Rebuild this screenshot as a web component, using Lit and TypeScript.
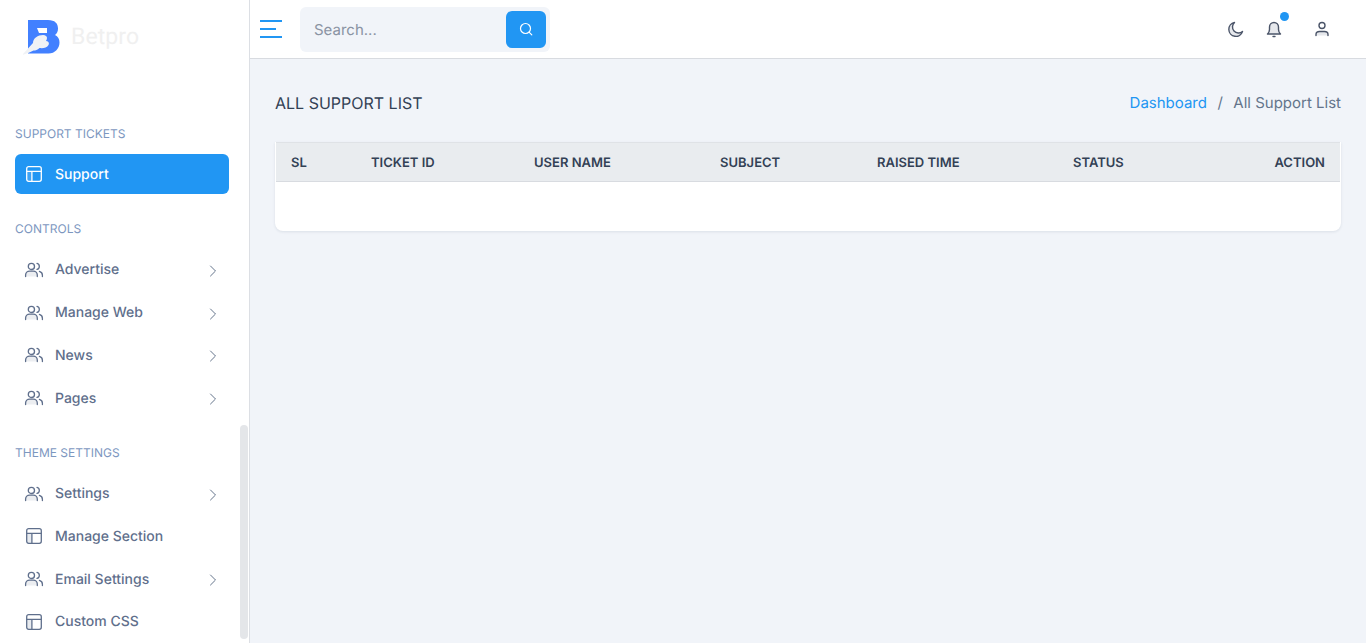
import { LitElement, html, css } from "lit";
import { customElement } from "lit/decorators.js";

const users = html`<svg class="ic" viewBox="0 0 20 20" fill="none" stroke="currentColor" stroke-width="1.300" stroke-linecap="round" stroke-linejoin="round"><path d="M1.600 16.600v-1.500c0-2.200 1.800-4 4-4h3.700c2.200 0 4 1.800 4 4v1.500" fill="#eceef1" stroke="none"/><path d="M1.600 16.600v-1.500c0-2.200 1.800-4 4-4h3.700c2.200 0 4 1.800 4 4v1.500"/><circle cx="7.400" cy="6.400" r="3.100"/><path d="M13 3.400a3.100 3.100 0 0 1 0 6M15.400 11.400c1.800.5 3 2 3 3.800v1.400"/></svg>`;
const layout = html`<svg class="ic" viewBox="0 0 20 20" fill="none" stroke="currentColor" stroke-width="1.300" stroke-linejoin="round"><rect x="2.700" y="2.700" width="14.600" height="14.600" rx="2" /><rect x="2.700" y="7.400" width="5.200" height="9.900" fill="currentColor" fill-opacity=".14" stroke="none"/><path d="M2.700 7.400h14.600M7.900 7.400v9.900"/></svg>`;
const chev = html`<svg class="chev" viewBox="0 0 8 12" fill="none" stroke="currentColor" stroke-width="1" stroke-linecap="round" stroke-linejoin="round"><path d="M1.500 1l5 5-5 5"/></svg>`;

type Item = { label: string; icon: "users" | "layout"; arrow?: boolean; active?: boolean };
const groups: { title: string; items: Item[] }[] = [
  { title: "SUPPORT TICKETS", items: [{ label: "Support", icon: "layout", active: true }] },
  { title: "CONTROLS", items: [
    { label: "Advertise", icon: "users", arrow: true },
    { label: "Manage Web", icon: "users", arrow: true },
    { label: "News", icon: "users", arrow: true },
    { label: "Pages", icon: "users", arrow: true },
  ] },
  { title: "THEME SETTINGS", items: [
    { label: "Settings", icon: "users", arrow: true },
    { label: "Manage Section", icon: "layout" },
    { label: "Email Settings", icon: "users", arrow: true },
    { label: "Custom CSS", icon: "layout" },
  ] },
];
const cols = ["SL", "TICKET ID", "USER NAME", "SUBJECT", "RAISED TIME", "STATUS", "ACTION"];

@customElement("app-root")
export class AppRoot extends LitElement {
  static styles = css`
    :host { display: block; height: 643px; overflow: hidden; font-family: Inter, "Noto Sans", sans-serif; background: #f1f4f9; color: #334155; text-rendering: geometricPrecision; }
    * { box-sizing: border-box; }
    .app { display: flex; height: 643px; }
    .side { position: relative; width: 250px; flex: none; height: 643px; background: #fff; border-right: 1px solid #dcdfe4; overflow: hidden; padding: 0 20px 0 15px; }
    .logo { height: 74px; padding: 18px 0 0 8px; display: flex; align-items: flex-start; gap: 8px; }
    .logo svg { width: 40px; height: 40px; flex: none; }
    .logo span { font-family: Roboto, sans-serif; font-size: 23px; line-height: 38px; color: #f0f0f0; letter-spacing: .1px; }
    .group { margin-bottom: 24.600px; }
    .group:first-of-type { padding-top: 50px; margin-bottom: 25px; }
    .title { font-size: 12px; line-height: 20px; color: #7d97bf; font-weight: 400; height: 20px; margin-bottom: 10.800px; }
    .group:first-of-type .title { margin-bottom: 10px; }
    .item { display: flex; align-items: center; height: 40px; margin-bottom: 2.800px; padding: 0 12px 0 9px; border-radius: 6px; color: #5f6f8c; font-size: 14px; font-weight: 500; }
    .item:last-child { margin-bottom: 0; }
    .item.active { background: #2196f3; color: #fff; }
    .ic { width: 20px; height: 20px; flex: none; margin-right: 11px; color: #5f6f8c; }
    .active .ic { color: #fff; }
    .chev { width: 8px; height: 12px; margin-left: auto; margin-top: 2px; color: #64748b; }
    .scroll { position: absolute; right: 1px; top: 425px; width: 8px; height: 214px; border-radius: 4px; background: #e4e6e9; }
    .main { flex: 1; min-width: 0; display: flex; flex-direction: column; }
    .top { height: 59px; flex: none; background: #fff; border-bottom: 1px solid #d8dbe0; display: flex; align-items: center; padding: 0 34px 0 10px; }
    .burger { width: 22px; height: 18px; margin-right: 18px; flex: none; }
    .search { width: 250px; height: 45px; background: #f1f4f9; border-radius: 6px; display: flex; align-items: center; padding: 0 4px 0 14px; font-size: 15px; color: #8a93a3; justify-content: space-between; }
    .sbtn { width: 40px; height: 37px; border-radius: 6px; background: #2196f3; display: flex; align-items: center; justify-content: center; }
    .sbtn svg { width: 16px; height: 16px; }
    .actions { margin-left: auto; display: flex; align-items: center; gap: 18px; }
    .actions .a { position: relative; width: 20px; height: 20px; color: #4a5468; }
    .actions .user { margin-left: 10px; }
    .actions svg { width: 20px; height: 20px; display: block; }
    .dot { position: absolute; width: 9px; height: 9px; border-radius: 50%; background: #2196f3; top: -7px; right: -5px; }
    .content { padding: 32px 25px 0; }
    .head { display: flex; justify-content: space-between; align-items: center; height: 23px; margin-bottom: 28px; }
    h1 { margin: 0; font-size: 16px; font-weight: 400; color: #334155; }
    .crumb { font-size: 15px; color: #64748b; display: flex; gap: 10.500px; }
    .crumb a { color: #2196f3; }
    .card { background: #fff; border-radius: 0 0 8px 8px; height: 89px; box-shadow: 0 1px 3px rgba(30,50,80,.1); overflow: hidden; padding: 0 1px; }
    table { width: 100%; border-collapse: separate; border-spacing: 0; table-layout: fixed; }
    th { height: 40px; padding: 1px 15px 0; background: #e9ecef; border-top: 1px solid #dfe2e6; border-bottom: 1px solid #d8dbe0; text-align: left; font-size: 13px; font-weight: 600; color: #334155; white-space: nowrap; }
    th:last-child { text-align: right; }
  `;

  private row(it: Item) {
    return html`<div class="item ${it.active ? "active" : ""}">
      ${it.icon === "users" ? users : layout}<span>${it.label}</span>${it.arrow ? chev : ""}
    </div>`;
  }

  render() {
    const widths = [80, 163, 186, 157, 196, 140, 142];
    return html`<div class="app">
      <aside class="side">
        <div class="logo">
          <svg viewBox="0 0 40 40">
            <path d="M5 2h20c7 0 10 3.500 10 8.500 0 3-1 5-3 6.500 3 1.500 4.500 4 4.500 7.500 0 6-4.500 11-11 11H5z" fill="#4280ff"/>
            <path d="M14 10h10v5H16z" fill="#fff"/>
            <path d="M-1 37L10 25c0-5 5-8 10-8 4 0 5 3 3 6 2.500 0 3.500 2 2.500 4-1.500 3-6 3.500-9 3-2 2-4 2.500-6 2.500C8 34 3 36 -1 37z" fill="#f0f2f5"/>
          </svg>
          <span>Betpro</span>
        </div>
        ${groups.map(g => html`<section class="group"><div class="title">${g.title}</div>${g.items.map(i => this.row(i))}</section>`)}
        <div class="scroll"></div>
      </aside>
      <div class="main">
        <header class="top">
          <svg class="burger" viewBox="0 0 22 18" fill="#2196f3"><rect width="22" height="2" y="0"/><rect width="16" height="2" y="8"/><rect width="22" height="2" y="16"/></svg>
          <div class="search"><span>Search...</span><div class="sbtn"><svg viewBox="0 0 16 16" fill="none" stroke="#fff" stroke-width="1.200" stroke-linecap="round"><circle cx="7.500" cy="7.500" r="5"/><path d="M11.300 11.300l2.500 2.500"/></svg></div></div>
          <div class="actions">
            <div class="a"><svg viewBox="0 0 20 20" fill="none" stroke="currentColor" stroke-width="1.400" stroke-linejoin="round"><path d="M8.500 3.500a7 7 0 1 0 8 9 6 6 0 0 1-8-9z" fill="#e6e8ec"/></svg></div>
            <div class="a"><svg viewBox="0 0 20 20" fill="none" stroke="currentColor" stroke-width="1.400" stroke-linecap="round" stroke-linejoin="round"><path d="M3.500 15h13c-1.300-1.200-2-2.300-2-4.500V8a4.500 4.500 0 0 0-9 0v2.500c0 2.200-.7 3.300-2 4.500z" fill="#e6e8ec"/><path d="M9 17.500h2"/></svg><i class="dot"></i></div>
            <div class="a user"><svg viewBox="0 0 20 20" fill="none" stroke="currentColor" stroke-width="1.400" stroke-linecap="round"><circle cx="10" cy="6.500" r="3"/><path d="M4 16.500v-1c0-2 1.500-3 3.500-3h5c2 0 3.500 1 3.500 3v1" fill="#e6e8ec"/></svg></div>
          </div>
        </header>
        <main class="content">
          <div class="head"><h1>ALL SUPPORT LIST</h1><div class="crumb"><a>Dashboard</a><span>/</span><span>All Support List</span></div></div>
          <div class="card"><table>
            <colgroup>${widths.map(w => html`<col style="width:${w}px">`)}</colgroup>
            <thead><tr>${cols.map(c => html`<th>${c}</th>`)}</tr></thead>
          </table></div>
        </main>
      </div>
    </div>`;
  }
}
